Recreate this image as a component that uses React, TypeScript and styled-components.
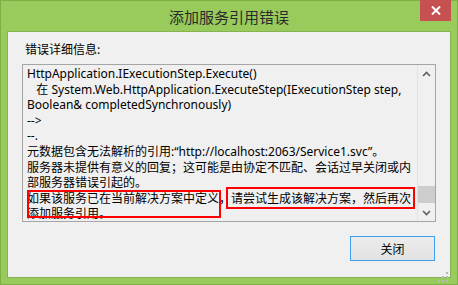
import styled, { createGlobalStyle } from "styled-components";

const GlobalStyle = createGlobalStyle`
  html, body {
    margin: 0;
    padding: 0;
    background: #97cb5b;
  }
  body {
    font-family: "Noto Sans", "Noto Sans CJK SC", sans-serif;
  }
`;

const StyledWindow = styled.div`
  box-sizing: border-box;
  width: 458px;
  height: 285px;
  background: #98cb5c;
  border: 1px solid #7eae48;
  display: flex;
  flex-direction: column;
  position: relative;
`;

const StyledTitleBar = styled.div`
  height: 30px;
  display: flex;
  align-items: center;
  justify-content: center;
  font-family: "Noto Sans CJK SC", sans-serif;
  font-size: 15px;
  color: #2a2a2a;
`;

const StyledCloseButton = styled.div`
  position: absolute;
  top: -1px;
  right: 6px;
  width: 31px;
  height: 21px;
  background: #c75050;
  display: flex;
  align-items: center;
  justify-content: center;
`;

const StyledPanel = styled.div`
  box-sizing: border-box;
  flex: 1;
  margin: 0 6px 6px 6px;
  background: #f0f0f0;
  border: 1px solid #86b352;
  display: flex;
  flex-direction: column;
  padding: 9px 14px 0 14px;
  position: relative;
`;

const StyledLabel = styled.div`
  font-family: "Noto Sans CJK SC", sans-serif;
  font-size: 12px;
  line-height: 16px;
  color: #000;
  padding-left: 3px;
  margin-bottom: 7px;
`;

const StyledTextBox = styled.div`
  box-sizing: border-box;
  height: 158px;
  border: 1px solid #a5a5a5;
  background: #f0f0f0;
  display: flex;
  position: relative;
`;

const StyledTextContent = styled.div`
  flex: 1;
  padding: 1px 0 0 4px;
  font-family: "Noto Sans", "Noto Sans CJK SC", sans-serif;
  font-size: 12px;
  line-height: 15.6px;
  color: #000;
  overflow: hidden;
`;

const StyledLine = styled.div`
  white-space: pre;
`;

const StyledScrollbar = styled.div`
  width: 17px;
  border-left: 1px solid #e2e2e2;
  background: #f0f0f0;
  display: flex;
  flex-direction: column;
  align-items: stretch;
`;

const StyledArrow = styled.div`
  height: 17px;
  display: flex;
  align-items: center;
  justify-content: center;
`;

const StyledTrack = styled.div`
  flex: 1;
  display: flex;
  flex-direction: column;
  justify-content: flex-end;
  padding-bottom: 1px;
`;

const StyledThumb = styled.div`
  height: 17px;
  background: #cdcdcd;
`;

const StyledMark = styled.div<{ $left: number; $top: number; $width: number; $height: number }>`
  position: absolute;
  box-sizing: border-box;
  left: ${(p) => p.$left}px;
  top: ${(p) => p.$top}px;
  width: ${(p) => p.$width}px;
  height: ${(p) => p.$height}px;
  border: 2px solid #f00;
  pointer-events: none;
`;

const StyledFooter = styled.div`
  display: flex;
  justify-content: flex-end;
  margin-top: 14px;
  padding-right: 1px;
`;

const StyledButton = styled.button`
  box-sizing: border-box;
  width: 85px;
  height: 25px;
  border: 1px solid #3c9ff0;
  background: linear-gradient(#ececec, #e2e2e2);
  font-family: "Noto Sans CJK SC", sans-serif;
  font-size: 12px;
  color: #000;
  padding: 0;
`;

const StyledGrip = styled.div`
  position: absolute;
  right: 2px;
  bottom: 2px;
  width: 10px;
  height: 10px;
`;

const lines = [
  "HttpApplication.IExecutionStep.Execute()",
  "   在 System.Web.HttpApplication.ExecuteStep(IExecutionStep step,",
  "Boolean& completedSynchronously)",
  "-->",
  "--.",
  "元数据包含无法解析的引用:“http://localhost:2063/Service1.svc”。",
  "服务器未提供有意义的回复；这可能是由协定不匹配、会话过早关闭或内",
  "部服务器错误引起的。",
  "如果该服务已在当前解决方案中定义，请尝试生成该解决方案，然后再次",
  "添加服务引用。",
];

const Chevron = ({ up }: { up?: boolean }) => (
  <svg width="9" height="6" viewBox="0 0 9 6">
    <path
      d={up ? "M1 5 L4.5 1.5 L8 5" : "M1 1 L4.5 4.5 L8 1"}
      fill="none"
      stroke="#606060"
      strokeWidth="1.6"
    />
  </svg>
);

export default function App() {
  return (
    <>
      <GlobalStyle />
      <StyledWindow>
        <StyledTitleBar>添加服务引用错误</StyledTitleBar>
        <StyledCloseButton>
          <svg width="10" height="9" viewBox="0 0 10 9">
            <path d="M1 0.5 L9 8.5 M9 0.5 L1 8.5" stroke="#fff" strokeWidth="2" />
          </svg>
        </StyledCloseButton>
        <StyledPanel>
          <StyledLabel>错误详细信息:</StyledLabel>
          <StyledTextBox>
            <StyledTextContent>
              {lines.map((line, i) => (
                <StyledLine key={i}>{line}</StyledLine>
              ))}
            </StyledTextContent>
            <StyledScrollbar>
              <StyledArrow>
                <Chevron up />
              </StyledArrow>
              <StyledTrack>
                <StyledThumb />
              </StyledTrack>
              <StyledArrow>
                <Chevron />
              </StyledArrow>
            </StyledScrollbar>
            <StyledMark $left={4} $top={125} $width={194} $height={28} />
            <StyledMark $left={203} $top={122} $width={189} $height={22} />
          </StyledTextBox>
          <StyledFooter>
            <StyledButton>关闭</StyledButton>
          </StyledFooter>
          <StyledGrip>
            <svg width="10" height="10" viewBox="0 0 10 10">
              {[
                [8, 0],
                [4, 4],
                [8, 4],
                [0, 8],
                [4, 8],
                [8, 8],
              ].map(([x, y], i) => (
                <rect key={i} x={x} y={y} width="2" height="2" fill="#b8b8b8" />
              ))}
            </svg>
          </StyledGrip>
        </StyledPanel>
      </StyledWindow>
    </>
  );
}
